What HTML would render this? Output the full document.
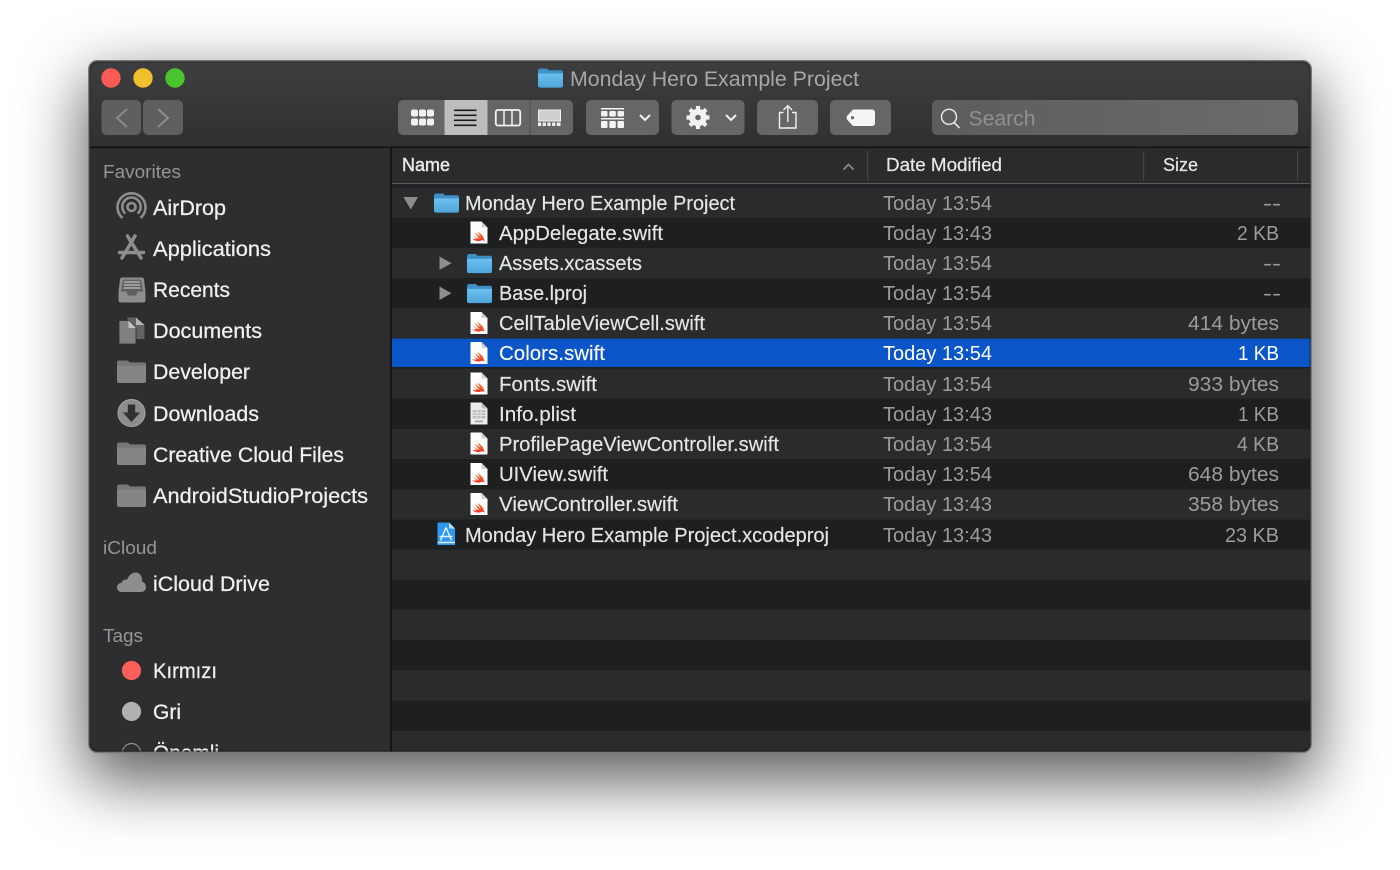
<!DOCTYPE html>
<html><head><meta charset="utf-8"><title>Monday Hero Example Project</title>
<style>
html,body{margin:0;padding:0;background:#fff;width:1400px;height:870px;overflow:hidden}
#shadow{position:absolute;left:89px;top:61px;width:1222px;height:691px;border-radius:8px;box-shadow:0 24px 64px 5px rgba(0,0,0,.64)}
svg{position:absolute;left:0;top:0}
text{font-family:"Liberation Sans",sans-serif}
.s{font-size:21px;fill:#f0f0f0;stroke:#f0f0f0;stroke-width:.25}
.h{font-size:18px;fill:#959697}
.f{font-size:20px;fill:#e6e6e6;stroke:#e6e6e6;stroke-width:.15}
.d{font-size:20px;fill:#9b9c9d}
.c{font-size:18px;fill:#e8e8e8;stroke:#e8e8e8;stroke-width:.2}
</style></head><body>
<div id="shadow"></div>
<svg width="1400" height="870" viewBox="0 0 1400 870" xmlns="http://www.w3.org/2000/svg">
<defs>
<linearGradient id="tb" x1="0" y1="0" x2="0" y2="1"><stop offset="0" stop-color="#3d3e3f"/><stop offset="1" stop-color="#2f3032"/></linearGradient>
<linearGradient id="sr" x1="0" y1="0" x2="1" y2="0"><stop offset="0" stop-color="#5c5d5d"/><stop offset="1" stop-color="#6a6b6b"/></linearGradient>
<linearGradient id="fo" x1="0" y1="0" x2="0" y2="1"><stop offset="0" stop-color="#6cc0ee"/><stop offset="1" stop-color="#4fa5dc"/></linearGradient>
<linearGradient id="bird" x1="0" y1="0" x2="0" y2="1"><stop offset="0" stop-color="#f88a3a"/><stop offset="1" stop-color="#ee2f22"/></linearGradient>
<clipPath id="win"><rect x="89" y="61" width="1222" height="691" rx="8"/></clipPath>
<clipPath id="sideclip"><rect x="89" y="148" width="301" height="604"/></clipPath>
<symbol id="swift" viewBox="0 0 18 23" overflow="visible">
<path d="M0.5 0.5H11.5L17.5 6.5V22.5H0.5Z" fill="#fff"/>
<path d="M11.5 .5V6.5H17.5Z" fill="#d0d0d0"/>
<path d="M2 13.5C5 16.2 8 17.500 9.500 17.800C7.500 15.800 5.800 13.500 4.600 11.300C7 13.500 9.300 15 10.500 15.700C9.200 14 8.200 12.300 7.500 10.400C10.800 12.800 13.500 14.800 13.600 17.500C14.200 18.400 14.500 19.400 14.400 20.300C13.700 19.300 12.500 19 11.600 19.300C9.200 20.600 5.200 20.400 2 17.500C3.500 18 5.200 18.200 6.800 17.700C5 16.600 3.300 15.100 2 13.500Z" fill="url(#bird)"/>
</symbol>
<symbol id="plist" viewBox="0 0 18 23" overflow="visible">
<path d="M0.5 0.5H11.5L17.5 6.5V22.5H0.5Z" fill="#ececec"/>
<path d="M11.5 .5V6.5H17.5Z" fill="#bdbdbd"/>
<path d="M2.5 8H15.5V16.5H2.5Z" fill="#bdbdbd"/>
<path d="M2.5 10.8H15.5M2.5 13.6H15.5M7 8V16.5M11 8V16.5" stroke="#ececec" stroke-width=".8" fill="none"/>
<rect x="5" y="18.6" width="8" height="1.6" fill="#a0a0a0"/>
</symbol>
<symbol id="folder" viewBox="0 0 25 20" overflow="visible">
<path d="M0 3C0 1.4.8.5 2.2.5H8C9.2.5 9.8 1 10.4 2.2H23C24.2 2.2 25 3 25 4.2V8H0Z" fill="#3f8fc8"/>
<path d="M0 5.4H25V17.6C25 18.9 24.2 19.6 23 19.6H2C.8 19.6 0 18.9 0 17.6Z" fill="url(#fo)"/>
</symbol>
<symbol id="gfolder" viewBox="0 0 29 23" overflow="visible">
<path d="M0 3C0 1.4.8.5 2.2.5H10C11.2.5 11.8 1 12.6 2.4H27C28.2 2.4 29 3.2 29 4.4V7H0Z" fill="#777778"/>
<path d="M0 5.8H29V21C29 22.2 28.2 23 27 23H2C.8 23 0 22.2 0 21Z" fill="#858586"/>
</symbol>
</defs>

<g clip-path="url(#win)">
<rect x="89" y="61" width="1222" height="691" fill="#2d2e30"/>
<rect x="89" y="61" width="1222" height="86" fill="url(#tb)"/>
<rect x="89" y="146.5" width="1222" height="1.6" fill="#111213"/>

<!-- list stripes -->
<rect x="392" y="148" width="919" height="604" fill="#2a2b2d"/>
<g fill="#1e1f21">
<rect x="392" y="217.7" width="919" height="30.2"/>
<rect x="392" y="278" width="919" height="30.2"/>
<rect x="392" y="338.4" width="919" height="30.2"/>
<rect x="392" y="398.8" width="919" height="30.2"/>
<rect x="392" y="459.1" width="919" height="30.2"/>
<rect x="392" y="519.5" width="919" height="30.2"/>
<rect x="392" y="579.8" width="919" height="30.2"/>
<rect x="392" y="640.2" width="919" height="30.2"/>
<rect x="392" y="700.6" width="919" height="30.2"/>
</g>
<rect x="392" y="338.6" width="919" height="28.4" fill="#0a56c8"/>
<rect x="390" y="148" width="2" height="604" fill="#141516"/>

<!-- column header -->
<rect x="392" y="148" width="919" height="35" fill="#2a2b2d"/>
<rect x="392" y="183" width="919" height="1.2" fill="#58595a"/>
<rect x="392" y="184.2" width="919" height="3.5" fill="#1f2022"/>
<rect x="867" y="151" width="1.2" height="29" fill="#454647"/>
<rect x="1143" y="151" width="1.2" height="29" fill="#454647"/>
<rect x="1297" y="151" width="1.2" height="29" fill="#454647"/>
<path d="M843.5 169.5L848.5 164.5L853.5 169.5" fill="none" stroke="#8d8e8f" stroke-width="1.6"/>
<text class="c" x="402" y="171" textLength="48" lengthAdjust="spacingAndGlyphs" style="stroke-width:.45">Name</text>
<text class="c" x="886" y="171" textLength="116" lengthAdjust="spacingAndGlyphs">Date Modified</text>
<text class="c" x="1163" y="171" textLength="35" lengthAdjust="spacingAndGlyphs">Size</text>

<!-- traffic lights -->
<circle cx="111" cy="78" r="9.7" fill="#fb5a55"/>
<circle cx="143" cy="78" r="9.7" fill="#efbf2c"/>
<circle cx="175" cy="78" r="9.7" fill="#4cc42e"/>

<!-- nav -->
<rect x="101.500" y="100" width="39.500" height="35" rx="5" fill="#5e5f60"/>
<rect x="143" y="100" width="40" height="35" rx="5" fill="#5e5f60"/>
<path d="M127 109L117 118L127 127" fill="none" stroke="#8b8c8c" stroke-width="2"/>
<path d="M158 109L168 118L158 127" fill="none" stroke="#8b8c8c" stroke-width="2"/>

<!-- title -->
<use href="#folder" x="538" y="68" width="25" height="20"/>
<text x="570" y="86" font-size="21" fill="#a6a7a8" textLength="289" lengthAdjust="spacingAndGlyphs">Monday Hero Example Project</text>

<!-- view segment -->
<rect x="398" y="100" width="175" height="35" rx="5" fill="#656667"/>
<rect x="444.500" y="100" width="43" height="35" fill="#bcbdbd"/>
<rect x="529.500" y="100" width="1" height="35" fill="#4f5051"/>
<g fill="#f2f2f2">
<rect x="411" y="109.500" width="7" height="7" rx="2"/><rect x="419" y="109.500" width="7" height="7" rx="2"/><rect x="427" y="109.500" width="7" height="7" rx="2"/>
<rect x="411" y="118.500" width="7" height="7" rx="2"/><rect x="419" y="118.500" width="7" height="7" rx="2"/><rect x="427" y="118.500" width="7" height="7" rx="2"/>
</g>
<g fill="#1b1b1b">
<rect x="454" y="109.500" width="22.500" height="1.600"/><rect x="454" y="114.500" width="22.500" height="1.600"/><rect x="454" y="119.500" width="22.500" height="1.600"/><rect x="454" y="124.500" width="22.500" height="1.600"/>
</g>
<rect x="495.800" y="110" width="24.400" height="15.500" rx="2" fill="none" stroke="#f2f2f2" stroke-width="1.800"/>
<path d="M504 110V125.500M512 110V125.500" stroke="#f2f2f2" stroke-width="1.500"/>
<rect x="538.500" y="110" width="22" height="11" fill="#cfcfcf" stroke="#f2f2f2" stroke-width="1"/>
<g fill="#f2f2f2"><rect x="538" y="122.500" width="3.200" height="3.500"/><rect x="542.700" y="122.500" width="3.200" height="3.500"/><rect x="547.400" y="122.500" width="3.200" height="3.500"/><rect x="552.100" y="122.500" width="3.200" height="3.500"/><rect x="556.800" y="122.500" width="3.700" height="3.500"/></g>

<!-- arrange -->
<rect x="586" y="100" width="73" height="35" rx="5" fill="#656667"/>
<g fill="#f2f2f2">
<rect x="601" y="108" width="23" height="1.500"/><rect x="601" y="118" width="23" height="1.500"/>
<rect x="601" y="111" width="6.500" height="5.500" rx="1"/><rect x="609.300" y="111" width="6.500" height="5.500" rx="1"/><rect x="617.500" y="111" width="6.500" height="5.500" rx="1"/>
<rect x="601" y="121" width="6.500" height="7" rx="1"/><rect x="609.300" y="121" width="6.500" height="7" rx="1"/><rect x="617.500" y="121" width="6.500" height="7" rx="1"/>
</g>
<path d="M640 115L645 120L650 115" fill="none" stroke="#f2f2f2" stroke-width="2"/>

<!-- action -->
<rect x="671.500" y="100" width="73" height="35" rx="5" fill="#656667"/>
<circle cx="698" cy="117.500" r="5.800" fill="none" stroke="#f2f2f2" stroke-width="6"/>
<g stroke="#f2f2f2" stroke-width="4.200">
<path d="M698 106V110M698 125V129M686.500 117.500H690.500M705.500 117.500H709.500M689.900 109.400L692.700 112.200M703.300 122.800L706.100 125.600M689.900 125.600L692.700 122.800M703.300 112.200L706.100 109.400"/>
</g>
<path d="M726 115L731 120L736 115" fill="none" stroke="#f2f2f2" stroke-width="2"/>

<!-- share -->
<rect x="757" y="100" width="61" height="35" rx="5" fill="#656667"/>
<path d="M783.500 112.500H779.500V128H796V112.500H792" fill="none" stroke="#f2f2f2" stroke-width="1.400"/>
<path d="M787.800 122V106.500M783.500 110L787.800 105.700L792 110" fill="none" stroke="#f2f2f2" stroke-width="1.400"/>

<!-- tag -->
<rect x="830" y="100" width="61" height="35" rx="5" fill="#656667"/>
<path d="M853 109.500H872C873.800 109.500 875 110.700 875 112.500V123C875 124.800 873.800 126 872 126H853L847 119.500C846.500 118.700 846.500 117 847 116Z" fill="#f5f5f5"/>
<circle cx="852.500" cy="117.700" r="1.600" fill="#656667"/>

<!-- search -->
<rect x="932" y="100" width="366" height="35" rx="5" fill="url(#sr)"/>
<circle cx="949" cy="116.800" r="7.500" fill="none" stroke="#ececec" stroke-width="1.400"/>
<path d="M954 122.300L959.500 128" stroke="#ececec" stroke-width="1.500"/>
<text x="968.500" y="125.500" font-size="21" fill="#8f9090" textLength="67" lengthAdjust="spacingAndGlyphs">Search</text>

<!-- sidebar -->
<g clip-path="url(#sideclip)">
<text class="h" x="103" y="178" textLength="78" lengthAdjust="spacingAndGlyphs">Favorites</text>
<g fill="none" stroke="#8d8d8e" stroke-width="2.600">
<path d="M122.500 218A14 14 0 1 1 140.500 218"/>
<path d="M125.300 213.500A9.200 9.200 0 1 1 137.700 213.500"/>
<circle cx="131.500" cy="207" r="4"/>
</g>
<g stroke="#8d8d8e" fill="none" stroke-linecap="round">
<path d="M127.500 236L141 258M135 236L122 258" stroke-width="3.500"/>
<path d="M119.500 252.500H143.500" stroke-width="3.400"/>
</g>
<path d="M122 277.500H142C143 277.500 143.800 278.200 144 279.200L145.500 292V300C145.500 301.500 144.500 302.500 143 302.500H121C119.500 302.500 118.500 301.500 118.500 300V292L120 279.200C120.200 278.200 121 277.500 122 277.500Z" fill="#8d8d8e"/>
<path d="M123 279.800H141L143 291.500H137.500L136 295.500H128L126.500 291.500H121Z" fill="#5f5f60"/>
<path d="M124 282H140M123.700 285H140.300M123.400 288H140.600" stroke="#a8a8a9" stroke-width="1.700"/>
<path d="M127.500 317.500H136L144.500 325V339H127.500Z" fill="#626263"/>
<path d="M119 320.500H128.500L136 328V344H119Z" fill="#808081" stroke="#2d2e30" stroke-width=".8"/>
<path d="M128.500 320.500V328H136Z" fill="#c4c4c4"/>
<path d="M136 317.500V325H144.500Z" fill="#b5b5b5"/>
<use href="#gfolder" x="117" y="360" width="29" height="23"/>
<circle cx="131.500" cy="413" r="13.500" fill="#8d8d8e" stroke="#a8a8a9" stroke-width="1"/>
<path d="M127.800 404.500H135.200V412.500H140.200L131.500 422L122.800 412.500H127.800Z" fill="#2f3032"/>
<use href="#gfolder" x="117" y="442" width="29" height="23"/>
<use href="#gfolder" x="117" y="484" width="29" height="23"/>
<text class="s" x="153" y="215" textLength="73" lengthAdjust="spacingAndGlyphs">AirDrop</text>
<text class="s" x="153" y="256" textLength="118" lengthAdjust="spacingAndGlyphs">Applications</text>
<text class="s" x="153" y="297" textLength="77" lengthAdjust="spacingAndGlyphs">Recents</text>
<text class="s" x="153" y="338" textLength="109" lengthAdjust="spacingAndGlyphs">Documents</text>
<text class="s" x="153" y="379" textLength="97" lengthAdjust="spacingAndGlyphs">Developer</text>
<text class="s" x="153" y="421" textLength="106" lengthAdjust="spacingAndGlyphs">Downloads</text>
<text class="s" x="153" y="462" textLength="191" lengthAdjust="spacingAndGlyphs">Creative Cloud Files</text>
<text class="s" x="153" y="503" textLength="215" lengthAdjust="spacingAndGlyphs">AndroidStudioProjects</text>
<text class="h" x="103" y="554" textLength="54" lengthAdjust="spacingAndGlyphs">iCloud</text>
<path d="M122 592C118.500 592 117 589.500 117 587.500C117 585 119 583 121.500 582.800C122.500 580 125 579 127 579.800C128.500 575.500 132 572.500 135.500 572.500C139.500 572.500 142 575.800 142 579.800C142 580.500 142 581 141.800 581.500C144.500 582 146 584.500 146 587C146 590 144 592 141 592Z" fill="#8d8d8e"/>
<text class="s" x="153" y="591" textLength="117" lengthAdjust="spacingAndGlyphs">iCloud Drive</text>
<text class="h" x="103" y="642" textLength="40" lengthAdjust="spacingAndGlyphs">Tags</text>
<circle cx="131.500" cy="670.500" r="9.600" fill="#fd5f5a"/>
<text class="s" x="153" y="678" textLength="64" lengthAdjust="spacingAndGlyphs">Kırmızı</text>
<circle cx="131.500" cy="711.500" r="9.600" fill="#b1b1b3"/>
<text class="s" x="153" y="719" textLength="28" lengthAdjust="spacingAndGlyphs">Gri</text>
<circle cx="131.500" cy="752.500" r="9" fill="none" stroke="#8d8d8e" stroke-width="1.200"/>
<text class="s" x="153" y="760" textLength="66" lengthAdjust="spacingAndGlyphs">Önemli</text>
</g>

<!-- list icons -->
<path d="M403.500 197H418L410.750 209.500Z" fill="#8c8d8e"/>
<use href="#folder" x="434" y="193" width="25" height="20"/>
<use href="#swift" x="470" y="221" width="18" height="23"/>
<path d="M439.500 256.500V270L451.500 263.250Z" fill="#8c8d8e"/>
<use href="#folder" x="467" y="253.500" width="25" height="20"/>
<path d="M439.500 286.500V300L451.500 293.250Z" fill="#8c8d8e"/>
<use href="#folder" x="467" y="283.500" width="25" height="20"/>
<use href="#swift" x="470" y="311.500" width="18" height="23"/>
<use href="#swift" x="470" y="341.500" width="18" height="23"/>
<use href="#swift" x="470" y="372" width="18" height="23"/>
<use href="#plist" x="470" y="402" width="18" height="23"/>
<use href="#swift" x="470" y="432" width="18" height="23"/>
<use href="#swift" x="470" y="462.500" width="18" height="23"/>
<use href="#swift" x="470" y="492.500" width="18" height="23"/>
<path d="M437.500 522.500H449L455 528.500V545H437.500Z" fill="#2f97ee"/>
<path d="M449 522.500V528.500H455Z" fill="#bfe0fa"/>
<path d="M446 527.500L440.500 540.500M446 527.500L451.500 540.500M439.500 536.500H452.500M437.500 542.500H455" stroke="#dff0fd" stroke-width="1.500" fill="none"/>

<!-- names -->
<text class="f" x="465" y="210" textLength="270" lengthAdjust="spacingAndGlyphs">Monday Hero Example Project</text>
<text class="f" x="499" y="240" textLength="164" lengthAdjust="spacingAndGlyphs">AppDelegate.swift</text>
<text class="f" x="499" y="270" textLength="143" lengthAdjust="spacingAndGlyphs">Assets.xcassets</text>
<text class="f" x="499" y="300" textLength="88" lengthAdjust="spacingAndGlyphs">Base.lproj</text>
<text class="f" x="499" y="330" textLength="206" lengthAdjust="spacingAndGlyphs">CellTableViewCell.swift</text>
<text class="f" x="499" y="360" textLength="106" lengthAdjust="spacingAndGlyphs" style="fill:#fff">Colors.swift</text>
<text class="f" x="499" y="391" textLength="98" lengthAdjust="spacingAndGlyphs">Fonts.swift</text>
<text class="f" x="499" y="421" textLength="77" lengthAdjust="spacingAndGlyphs">Info.plist</text>
<text class="f" x="499" y="451" textLength="280" lengthAdjust="spacingAndGlyphs">ProfilePageViewController.swift</text>
<text class="f" x="499" y="481" textLength="109" lengthAdjust="spacingAndGlyphs">UIView.swift</text>
<text class="f" x="499" y="511" textLength="179" lengthAdjust="spacingAndGlyphs">ViewController.swift</text>
<text class="f" x="465" y="542" textLength="364" lengthAdjust="spacingAndGlyphs">Monday Hero Example Project.xcodeproj</text>

<!-- dates -->
<text class="d" x="883" y="210" textLength="109" lengthAdjust="spacingAndGlyphs">Today 13:54</text>
<text class="d" x="883" y="240" textLength="109" lengthAdjust="spacingAndGlyphs">Today 13:43</text>
<text class="d" x="883" y="270" textLength="109" lengthAdjust="spacingAndGlyphs">Today 13:54</text>
<text class="d" x="883" y="300" textLength="109" lengthAdjust="spacingAndGlyphs">Today 13:54</text>
<text class="d" x="883" y="330" textLength="109" lengthAdjust="spacingAndGlyphs">Today 13:54</text>
<text class="d" x="883" y="360" textLength="109" lengthAdjust="spacingAndGlyphs" style="fill:#fff">Today 13:54</text>
<text class="d" x="883" y="391" textLength="109" lengthAdjust="spacingAndGlyphs">Today 13:54</text>
<text class="d" x="883" y="421" textLength="109" lengthAdjust="spacingAndGlyphs">Today 13:43</text>
<text class="d" x="883" y="451" textLength="109" lengthAdjust="spacingAndGlyphs">Today 13:54</text>
<text class="d" x="883" y="481" textLength="109" lengthAdjust="spacingAndGlyphs">Today 13:54</text>
<text class="d" x="883" y="511" textLength="109" lengthAdjust="spacingAndGlyphs">Today 13:43</text>
<text class="d" x="883" y="542" textLength="109" lengthAdjust="spacingAndGlyphs">Today 13:43</text>

<!-- sizes -->
<text class="d" x="1263" y="210" textLength="18" lengthAdjust="spacingAndGlyphs">--</text>
<text class="d" x="1237" y="240" textLength="42" lengthAdjust="spacingAndGlyphs">2 KB</text>
<text class="d" x="1263" y="270" textLength="18" lengthAdjust="spacingAndGlyphs">--</text>
<text class="d" x="1263" y="300" textLength="18" lengthAdjust="spacingAndGlyphs">--</text>
<text class="d" x="1188" y="330" textLength="91" lengthAdjust="spacingAndGlyphs">414 bytes</text>
<text class="d" x="1238" y="360" textLength="41" lengthAdjust="spacingAndGlyphs" style="fill:#fff">1 KB</text>
<text class="d" x="1188" y="391" textLength="91" lengthAdjust="spacingAndGlyphs">933 bytes</text>
<text class="d" x="1238" y="421" textLength="41" lengthAdjust="spacingAndGlyphs">1 KB</text>
<text class="d" x="1237" y="451" textLength="42" lengthAdjust="spacingAndGlyphs">4 KB</text>
<text class="d" x="1188" y="481" textLength="91" lengthAdjust="spacingAndGlyphs">648 bytes</text>
<text class="d" x="1188" y="511" textLength="91" lengthAdjust="spacingAndGlyphs">358 bytes</text>
<text class="d" x="1225" y="542" textLength="54" lengthAdjust="spacingAndGlyphs">23 KB</text>
</g>
<rect x="88.700" y="60.700" width="1222.600" height="691.800" rx="8.500" fill="none" stroke="#77787a" stroke-width="1.400"/>
<rect x="90" y="62" width="1220" height="689" rx="7.500" fill="none" stroke="#1c1d1e" stroke-width="1" opacity=".7"/>
</svg>
</body></html>
